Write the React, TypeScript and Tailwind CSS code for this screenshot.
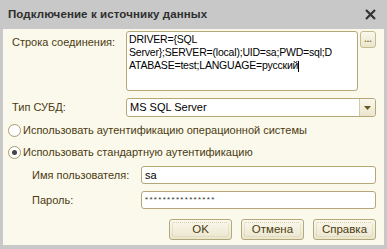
const label = 'text-[11px] text-[#4a3b10]';
const field = 'bg-white border border-[#b5a778] rounded-[3px]';

function Btn({ children }: { children: React.ReactNode }) {
  return (
    <div className="w-[63px] h-[21px] rounded-[3px] border border-[#b3a77c] bg-gradient-to-b from-[#fbf9ee] to-[#ebe5cc] p-[2px]">
      <div className="h-full border border-dotted border-[#d6cfb2] rounded-[2px] flex items-center justify-center text-[11.5px] text-[#4a3b10]">
        {children}
      </div>
    </div>
  );
}

function Radio({ on, text }: { on?: boolean; text: string }) {
  return (
    <div className="h-[22px] flex items-center pl-[5px]">
      <span className="w-[13px] h-[13px] rounded-full border border-[#a89b70] bg-white flex items-center justify-center">
        {on && <span className="w-[5px] h-[5px] rounded-full bg-[#444]" />}
      </span>
      <span className={`ml-[2px] ${label}`}>{text}</span>
    </div>
  );
}

export default function App() {
  return (
    <div
      className="w-[387px] h-[249px] bg-[#c8c8c8] flex flex-col"
      style={{ fontFamily: '"Liberation Sans", Arial, sans-serif' }}
    >
      <div className="h-[29px] flex items-center justify-between pl-[8px] pr-[11px] shrink-0">
        <span className="text-[11.5px] font-bold text-[#2e2e2e] tracking-[0.1px]">Подключение к источнику данных</span>
        <svg width="11" height="11" viewBox="0 0 11 11">
          <path d="M1 1 L10 10 M10 1 L1 10" stroke="#333" strokeWidth="2.2" />
        </svg>
      </div>
      <div className="mx-[3px] mb-[4px] flex-1 bg-[#fbf9ec] pr-[8px] flex flex-col">
        <div className="flex mt-[2px]">
          <div className={`w-[123px] pl-[9px] pt-[3px] ${label}`}>Строка соединения:</div>
          <div className={`${field} w-[232px] h-[60px] px-[2px] pt-[1px] text-[10.5px] leading-[13px] text-black whitespace-nowrap overflow-hidden tracking-[-0.2px]`}>
            <div>DRIVER={'{'}SQL</div>
            <div>Server{'}'};SERVER=(local);UID=sa;PWD=sql;D</div>
            <div>
              ATABASE=test;LANGUAGE=русский
              <span className="inline-block w-px h-[11px] bg-black align-middle" />
            </div>
          </div>
          <div className="ml-[2px] w-[16px] h-[17px] rounded-[3px] border border-[#c5ba92] bg-gradient-to-b from-[#fbf9ee] to-[#ebe5cc] flex items-end justify-center pb-[3px] text-[9px] leading-none text-[#7a6a2a] font-bold">
            ...
          </div>
        </div>
        <div className="flex items-center mt-[7px]">
          <div className={`w-[123px] pl-[9px] ${label}`}>Тип СУБД:</div>
          <div className={`${field} flex-1 h-[19px] flex items-center`}>
            <span className="flex-1 pl-[3px] text-[11px] text-black">MS SQL Server</span>
            <span className="w-[16px] h-full border-l border-[#d3c9a6] bg-gradient-to-b from-[#fbf9ee] to-[#ebe5cc] flex items-center justify-center rounded-r-[2px]">
              <svg width="7" height="4" viewBox="0 0 7 4"><path d="M0 0 H7 L3.5 4 Z" fill="#6b5a1e" /></svg>
            </span>
          </div>
        </div>
        <div className="mt-[2px]">
          <Radio text="Использовать аутентификацию операционной системы" />
          <Radio on text="Использовать стандартную аутентификацию" />
        </div>
        <div className="flex items-center mt-[3px]">
          <div className={`w-[138px] pl-[29px] ${label}`}>Имя пользователя:</div>
          <div className={`${field} flex-1 h-[18px] flex items-center pl-[3px] text-[11px] text-black`}>sa</div>
        </div>
        <div className="flex items-center mt-[7px]">
          <div className={`w-[138px] pl-[29px] ${label}`}>Пароль:</div>
          <div className={`${field} flex-1 h-[18px] flex items-center pl-[3px] text-[8px] tracking-[1.3px] text-[#333]`}>
            ****************
          </div>
        </div>
        <div className="flex justify-end gap-[9px] mt-[10px]">
          <Btn>OK</Btn>
          <Btn>Отмена</Btn>
          <Btn>Справка</Btn>
        </div>
      </div>
    </div>
  );
}
